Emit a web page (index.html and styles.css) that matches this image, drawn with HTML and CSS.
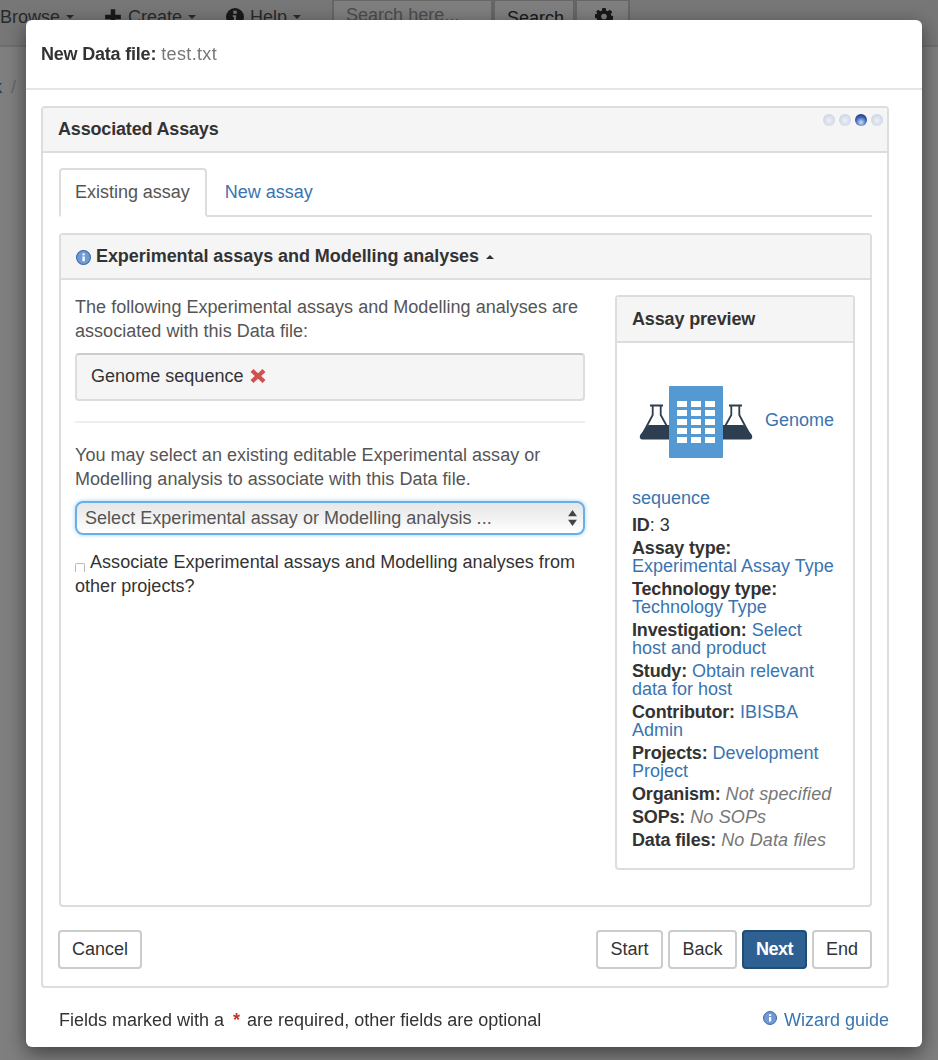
FILE: index.html
```html
<!DOCTYPE html>
<html lang="en">
<head>
	<meta charset="UTF-8">
	<title>New Data file</title>
	<link rel="stylesheet" href="styles.css">
</head>
<body>
	<div class="navbar">
		<span class="nav-item browse">Browse <i class="caret"></i></span>
		<span class="nav-item"><svg class="nav-icon" viewBox="0 0 16 16"><path d="M6 1h4v5h5v4h-5v5H6v-5H1V6h5z"/></svg> Create <i class="caret"></i></span>
		<span class="nav-item"><svg class="nav-icon" viewBox="0 0 16 16"><path fill-rule="evenodd" d="M8 0a8 8 0 1 1 0 16A8 8 0 0 1 8 0zM6.500 2.500v2.500h3V2.500zM6 6.500V8h1v3H6v2h4v-2H9V6.500z"/></svg> Help <i class="caret"></i></span>
		<span class="nav-search">Search here...</span>
		<span class="nav-btn search-btn">Search</span>
		<span class="nav-btn gear-btn"><svg class="nav-icon" viewBox="0 0 16 16"><path fill-rule="evenodd" d="M6.500 0h3l.4 2.200 1.400.6L13.200 1.500l2.100 2.100-1.300 1.900.6 1.400 2.200.4v3l-2.200.4-.6 1.400 1.300 1.900-2.100 2.100-1.900-1.300-1.400.6-.4 2.200h-3l-.4-2.200-1.400-.6-1.900 1.300L.7 12.400 2 10.500l-.6-1.400L-.8 8.700v-3l2.200-.4.600-1.400L.7 3.600 2.800 1.500l1.900 1.300 1.400-.6zM8 5a2.500 2.500 0 1 0 0 5 2.500 2.500 0 0 0 0-5z"/></svg></span>
	</div>
	<div class="breadcrumb"><span class="crumb-link">k</span> <span class="crumb-sep">/</span></div>
	<div class="backdrop"></div>

	<div class="modal">
		<div class="modal-header"><b>New Data file:</b> <span class="muted">test.txt</span></div>
		<div class="modal-body">
			<div class="panel wizard">
				<div class="panel-heading wizard-heading">
					Associated Assays
					<div class="orbs">
						<i class="orb"></i><i class="orb"></i><i class="orb orb-on"></i><i class="orb"></i>
					</div>
				</div>
				<div class="wizard-body">
					<ul class="tabs">
						<li class="tab active">Existing assay</li>
						<li class="tab"><a href="#">New assay</a></li>
					</ul>
					<div class="panel assays">
						<div class="panel-heading assays-heading">
							<svg class="info" viewBox="0 0 14 14"><circle cx="7" cy="7" r="6.500" fill="#6f9ad3" stroke="#3f6aa8"/><rect x="6" y="6" width="2.200" height="4.500" fill="#fff"/><rect x="6" y="3.200" width="2.200" height="1.800" fill="#fff"/></svg>
							Experimental assays and Modelling analyses
							<i class="caret-up"></i>
						</div>
						<div class="assays-body">
							<div class="assays-left">
								<p class="intro">The following Experimental assays and Modelling analyses are associated with this Data file:</p>
								<div class="well">Genome sequence <svg class="remove" viewBox="0 0 16 16"><path d="M3.500 1 8 5.200 12.500 1 15.500 4 11.200 8 15.500 12 12.500 15 8 10.800 3.500 15 .5 12 4.800 8 .5 4z"/></svg></div>
								<hr class="rule">
								<p class="intro">You may select an existing editable Experimental assay or Modelling analysis to associate with this Data file.</p>
								<div class="select-wrap">
									<span class="select-text">Select Experimental assay or Modelling analysis ...</span>
									<svg class="select-arrows" viewBox="0 0 10 18"><path d="M5 0 10 7H0zM5 18 0 11h10z"/></svg>
								</div>
								<p class="check-line"><input type="checkbox" class="check"> Associate Experimental assays and Modelling analyses from other projects?</p>
							</div>
							<div class="panel preview">
								<div class="panel-heading preview-heading">Assay preview</div>
								<div class="preview-body">
									<div class="preview-title">
										<svg class="assay-icon" viewBox="0 1 128 128">
											<path d="M18 49.500h13M20.700 50v9L9.500 80M28.700 50v9L37 74" fill="none" stroke="#2c3e50" stroke-width="1.800"/>
											<path d="M16.500 69H37v14.500H11c-3 0-4-2-2.500-5z" fill="#2c3e50"/>
											<path d="M97 49.500h13M107.300 50v9L118.500 80M99.300 50v9L91 74" fill="none" stroke="#2c3e50" stroke-width="1.800"/>
											<path d="M111.500 69H91v14.500h26c3 0 4-2 2.500-5z" fill="#2c3e50"/>
											<rect x="37" y="30" width="54" height="72" rx="1" fill="#5499d1"/>
											<g fill="#fff">
												<rect x="45" y="45" width="10" height="6"/><rect x="59" y="45" width="10" height="6"/><rect x="73" y="45" width="10" height="6"/>
												<rect x="45" y="54" width="10" height="6"/><rect x="59" y="54" width="10" height="6"/><rect x="73" y="54" width="10" height="6"/>
												<rect x="45" y="63" width="10" height="6"/><rect x="59" y="63" width="10" height="6"/><rect x="73" y="63" width="10" height="6"/>
												<rect x="45" y="72" width="10" height="6"/><rect x="59" y="72" width="10" height="6"/><rect x="73" y="72" width="10" height="6"/>
												<rect x="45" y="81" width="10" height="6"/><rect x="59" y="81" width="10" height="6"/><rect x="73" y="81" width="10" height="6"/>
											</g>
										</svg>
										<a href="#">Genome sequence</a>
									</div>
									<p class="meta meta-id"><b>ID</b>: 3</p>
									<p class="meta"><b>Assay type:</b> <a href="#">Experimental Assay Type</a></p>
									<p class="meta"><b>Technology type:</b> <a href="#">Technology Type</a></p>
									<p class="meta"><b>Investigation:</b> <a href="#">Select host and product</a></p>
									<p class="meta"><b>Study:</b> <a href="#">Obtain relevant data for host</a></p>
									<p class="meta"><b>Contributor:</b> <a href="#">IBISBA Admin</a></p>
									<p class="meta"><b>Projects:</b> <a href="#">Development Project</a></p>
									<p class="meta"><b>Organism:</b> <em>Not specified</em></p>
									<p class="meta"><b>SOPs:</b> <em>No SOPs</em></p>
									<p class="meta"><b>Data files:</b> <em>No Data files</em></p>
								</div>
							</div>
						</div>
					</div>
					<div class="actions">
						<span class="btn">Cancel</span>
						<div class="actions-right">
							<span class="btn btn-step">Start</span>
							<span class="btn btn-step">Back</span>
							<span class="btn btn-primary">Next</span>
							<span class="btn">End</span>
						</div>
					</div>
				</div>
			</div>
			<div class="footnote">
				<span>Fields marked with a <span class="req">*</span> are required, other fields are optional</span>
				<a href="#" class="guide"><svg class="info-small" viewBox="0 0 14 14"><circle cx="7" cy="7" r="6.500" fill="#6f9ad3" stroke="#3f6aa8"/><rect x="6" y="6" width="2.200" height="4.500" fill="#fff"/><rect x="6" y="3.200" width="2.200" height="1.800" fill="#fff"/></svg> Wizard guide</a>
			</div>
		</div>
	</div>
</body>
</html>
```

FILE: styles.css
```css
*{
	margin: 0;
	padding: 0;
	box-sizing: border-box;
}
html,body{
	height: 100%;
	overflow: hidden;
}
body{
	background-color: #fff;
	font-family: "Liberation Sans", Arial, sans-serif;
	font-size: 18px;
	line-height: 24px;
	color: #333;
}
a{
	color: #3a74b0;
	text-decoration: none;
}
ul{
	list-style: none;
}

/* page behind the dialog */
.navbar{
	height: 47px;
	display: flex;
	align-items: flex-start;
	background-color: #eee;
	border-bottom: 2px solid #ddd;
	padding-top: 5px;
	color: #555;
}
.nav-item{
	display: flex;
	align-items: center;
	gap: 6px;
	margin-right: 30px;
	height: 24px;
	white-space: nowrap;
}
.nav-icon{
	width: 18px;
	height: 18px;
	fill: #333;
}
.caret{
	border-top: 4px solid #555;
	border-left: 4px solid transparent;
	border-right: 4px solid transparent;
}
.nav-search{
	width: 161px;
	height: 40px;
	margin: -6px 0 0 1px;
	padding: 2px 12px;
	background-color: #fff;
	border: 2px solid #ccc;
	color: #999;
}
.nav-btn{
	height: 40px;
	margin-top: -6px;
	padding: 5px 12px;
	background-color: #fff;
	border: 2px solid #ccc;
	color: #333;
}
.search-btn{
	width: 82px;
	text-align: center;
}
.gear-btn{
	width: 55px;
	padding: 7px 18px;
}
.breadcrumb{
	height: 40px;
	margin-top: 20px;
	padding-top: 8px;
	color: #ccc;
}
.crumb-link{
	color: #3a74b0;
	margin-left: -7px;
}
.crumb-sep{
	margin-left: 4px;
}
.backdrop{
	position: fixed;
	top: 0;
	left: 0;
	right: 0;
	bottom: 0;
	background-color: rgba(0,0,0,.5);
}

/* dialog */
.modal{
	position: absolute;
	left: 26px;
	top: 20px;
	width: 896px;
	height: 1027px;
	background-color: #fff;
	border-radius: 6px;
	box-shadow: 0 6px 20px rgba(0,0,0,.5);
}
.modal-header{
	height: 70px;
	padding: 22px 15px 0;
	border-bottom: 2px solid #e5e5e5;
}
.modal-header b{
	font-weight: bold;
	letter-spacing: -.2px;
}
.muted{
	color: #777;
	letter-spacing: .35px;
}
.modal-body{
	padding: 16px 33px 0 15px;
}
.panel{
	border: 2px solid #ddd;
	border-radius: 4px;
	background-color: #fff;
}
.panel-heading{
	background-color: #f5f5f5;
	border-bottom: 2px solid #ddd;
	font-weight: bold;
}
.wizard{
	height: 882px;
	position: relative;
}
.wizard-heading{
	height: 45px;
	padding: 9px 15px;
	letter-spacing: -.17px;
}
.orbs{
	position: absolute;
	top: 6px;
	right: 4px;
	display: flex;
	gap: 4px;
}
.orb{
	width: 12px;
	height: 12px;
	border-radius: 50%;
	background: radial-gradient(circle at 50% 55%, #eef1f7, #bfcadf);
}
.orb-on{
	background: radial-gradient(circle at 50% 70%, #d5e2f8 0, #3d68bb 50%, #0f1d45 100%);
}
.wizard-body{
	padding: 15px 16px 0;
}
.tabs{
	display: flex;
	height: 49px;
	border-bottom: 2px solid #ddd;
	margin-right: -1px;
}
.tab{
	padding: 12px 19px 12px 18px;
}
.tab.active{
	height: 49px;
	padding: 10px 15px 10px 14px;
	background-color: #fff;
	border: 2px solid #ddd;
	border-bottom-color: #fff;
	border-radius: 4px 4px 0 0;
	color: #555;
	letter-spacing: -.02px;
}
.assays{
	height: 674px;
	margin: 16px -1px 0 0;
}
.assays-heading{
	height: 45px;
	padding: 9px 15px;
	letter-spacing: -.05px;
}
.info{
	width: 15px;
	height: 15px;
	vertical-align: -3px;
}
.caret-up{
	display: inline-block;
	margin-left: 2px;
	vertical-align: 3px;
	border-bottom: 4px solid #333;
	border-left: 4px solid transparent;
	border-right: 4px solid transparent;
}
.assays-body{
	display: flex;
	gap: 30px;
	padding: 15px 15px 15px 14px;
}
.assays-left{
	width: 510px;
	color: #555;
	letter-spacing: .03px;
}
.well{
	height: 48px;
	margin-top: 10px;
	padding: 9px 14px;
	background-color: #f5f5f5;
	border: 2px solid #ddd;
	border-top-color: #ccc;
	border-radius: 4px;
	color: #333;
}
.remove{
	width: 16px;
	height: 16px;
	margin-left: 1px;
	fill: #d0524e;
	vertical-align: -2px;
}
.rule{
	height: 2px;
	margin: 20px 0;
	border: 0;
	background-color: #eee;
}
.select-wrap{
	position: relative;
	height: 34px;
	margin-top: 10px;
	padding: 3px 8px;
	border: 2px solid #66afe9;
	border-radius: 8px;
	background: linear-gradient(#e6e6e6, #f2f2f2 50%, #fff);
	box-shadow: 0 0 4px rgba(102,175,233,.6);
}
.select-arrows{
	position: absolute;
	top: 7px;
	right: 6px;
	width: 9px;
	height: 16px;
	fill: #444;
}
.check-line{
	margin-top: 15px;
	color: #333;
}
.check{
	appearance: none;
	width: 10px;
	height: 9px;
	margin-right: 1px;
	border: 1px solid #bbb;
	border-bottom: 0;
	border-radius: 2px 2px 0 0;
	background-color: #fff;
	vertical-align: -4px;
}
.preview{
	width: 240px;
	height: 575px;
}
.preview-heading{
	height: 46px;
	padding: 10px 15px;
	letter-spacing: -.15px;
}
.preview-body{
	padding: 0 15px;
	line-height: 18px;
}
.preview-title{
	margin-top: 14px;
	line-height: 27px;
}
.assay-icon{
	width: 128px;
	height: 128px;
	vertical-align: middle;
}
.meta{
	line-height: 18px;
	margin-bottom: 5px;
}
.meta-id{
	margin-top: 4px;
}
.meta b{
	color: #333;
	letter-spacing: -.17px;
}
.meta em{
	color: #777;
	letter-spacing: .15px;
}
.actions{
	display: flex;
	justify-content: space-between;
	margin: 23px -1px 0 -1px;
}
.actions-right{
	display: flex;
	gap: 5px;
}
.btn{
	height: 39px;
	padding: 5px 12px;
	background-color: #fff;
	border: 2px solid #ccc;
	border-radius: 4px;
	color: #333;
}
.btn-step{
	padding: 5px 12.500px;
}
.btn-primary{
	background-color: #2e6091;
	border-color: #204d74;
	color: #fff;
	font-weight: bold;
	letter-spacing: -.5px;
}
.footnote{
	display: flex;
	justify-content: space-between;
	padding: 20px 0 0 18px;
}
.req{
	color: #c9302c;
	font-weight: bold;
	margin: 0 2px 0 4px;
}
.info-small{
	width: 14px;
	height: 14px;
	vertical-align: 1px;
	margin-right: 2px;
}
```
